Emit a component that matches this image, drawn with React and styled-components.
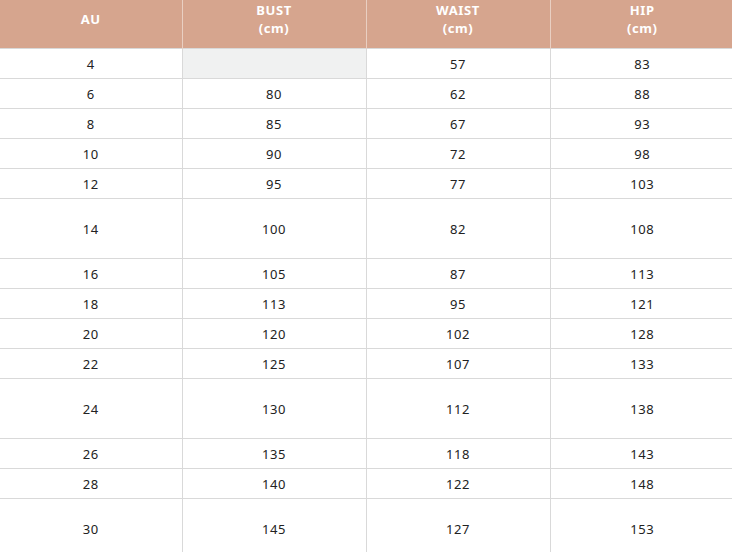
import React from "react";
import styled, { createGlobalStyle } from "styled-components";

const GlobalStyle = createGlobalStyle`
  html, body {
    margin: 0;
    padding: 0;
    background: #ffffff;
    overflow: hidden;
  }
`;

const Wrapper = styled.div`
  width: 732px;
  height: 552px;
  overflow: hidden;
  font-family: "Noto Sans", "Open Sans", sans-serif;
`;

const Table = styled.table`
  width: 734px;
  margin-top: -10px;
  border-collapse: collapse;
  table-layout: fixed;
`;

const HeadCell = styled.th`
  height: 58px;
  padding: 0;
  background: #d6a58e;
  color: #ffffff;
  font-size: 13px;
  font-weight: 700;
  letter-spacing: 0.6px;
  line-height: 18px;
  text-align: center;
  vertical-align: middle;
  border-left: 1px solid #e9cfc2;
  &:first-child {
    border-left: none;
  }
`;

const Row = styled.tr`
  height: ${(props) => (props.tall ? "60px" : "30px")};
  border-top: 1px solid #d9d9d9;
`;

const Cell = styled.td`
  padding: 0;
  font-size: 13px;
  letter-spacing: 0.6px;
  color: #222222;
  text-align: center;
  vertical-align: middle;
  background: ${(props) => (props.empty ? "#f0f1f1" : "#ffffff")};
  border-left: 1px solid #d9d9d9;
  &:first-child {
    border-left: none;
  }
`;

const rows = [
  ["4", "", "57", "83"],
  ["6", "80", "62", "88"],
  ["8", "85", "67", "93"],
  ["10", "90", "72", "98"],
  ["12", "95", "77", "103"],
  ["14", "100", "82", "108", true],
  ["16", "105", "87", "113"],
  ["18", "113", "95", "121"],
  ["20", "120", "102", "128"],
  ["22", "125", "107", "133"],
  ["24", "130", "112", "138", true],
  ["26", "135", "118", "143"],
  ["28", "140", "122", "148"],
  ["30", "145", "127", "153", true],
];

const App = () => {
  return (
    <Wrapper>
      <GlobalStyle />
      <Table>
        <colgroup>
          <col style={{ width: "182px" }} />
          <col style={{ width: "184px" }} />
          <col style={{ width: "184px" }} />
          <col style={{ width: "184px" }} />
        </colgroup>
        <thead>
          <tr>
            <HeadCell>AU</HeadCell>
            <HeadCell>BUST<br />(cm)</HeadCell>
            <HeadCell>WAIST<br />(cm)</HeadCell>
            <HeadCell>HIP<br />(cm)</HeadCell>
          </tr>
        </thead>
        <tbody>
          {rows.map(([au, bust, waist, hip, tall]) => (
            <Row key={au} tall={tall}>
              <Cell>{au}</Cell>
              <Cell empty={!bust}>{bust}</Cell>
              <Cell>{waist}</Cell>
              <Cell>{hip}</Cell>
            </Row>
          ))}
        </tbody>
      </Table>
    </Wrapper>
  );
};

export default App;
